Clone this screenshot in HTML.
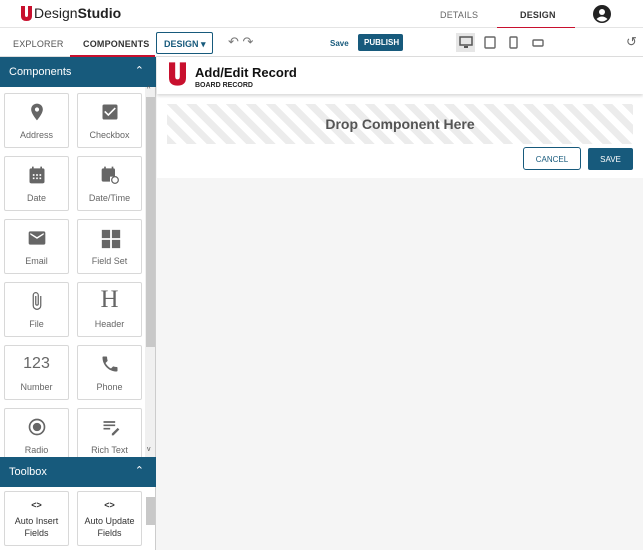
<!DOCTYPE html>
<html><head><style>
*{box-sizing:border-box;margin:0;padding:0}
body{width:643px;height:550px;overflow:hidden;font-family:"Liberation Sans",Arial,sans-serif;background:#f5f5f5;position:relative;color:#333}
.a{position:absolute}
.top{left:0;top:0;width:643px;height:28px;background:#fff;border-bottom:1px solid #e4e4e4}
.tb{left:0;top:28px;width:643px;height:29px;background:#fff;border-bottom:1px solid #ddd}
.tab{font-size:9px;font-weight:bold;color:#777;letter-spacing:.2px}
.side{left:0;top:57px;width:156px;height:493px;background:#fff;border-right:1px solid #ccc}
.hd{left:0;width:156px;height:30px;background:#175a7c;color:#fff;font-size:11px;padding:9px 0 0 9px}
.card{position:absolute;width:65px;height:55px;border:1px solid #d8d8d8;border-radius:2px;background:#fff;text-align:center;font-size:9px;color:#666}
.card .l{position:absolute;left:0;right:0;top:36px}
.card svg{position:absolute;left:22px;top:8px}
.sb{background:#c8c8c8}
</style></head><body>
<div class="a top"></div>
<svg class="a" style="left:21px;top:6px" width="11" height="15" viewBox="0 0 11 15"><path d="M0 0h4v9q0 2 1.5 2T7 9V0h4v10q0 5-5.5 5T0 10z" fill="#c8102e"/></svg>
<div class="a" style="left:34px;top:5px;font-size:14px;color:#222">Design<b>Studio</b></div>
<div class="a tab" style="left:440px;top:10px;font-weight:normal;color:#666">DETAILS</div>
<div class="a tab" style="left:520px;top:10px;color:#333">DESIGN</div>
<div class="a" style="left:497px;top:27px;width:78px;height:2px;background:#c8102e"></div>
<svg class="a" style="left:593px;top:5px" width="18" height="18" viewBox="0 0 18 18"><circle cx="9" cy="9" r="9" fill="#222"/><circle cx="9" cy="7" r="3" fill="#fff"/><path d="M3.5 14q5.5-5 11 0q-5.5 5-11 0z" fill="#fff"/></svg>
<div class="a tb"></div>
<div class="a tab" style="left:13px;top:39px;font-weight:normal;color:#555">EXPLORER</div>
<div class="a tab" style="left:83px;top:39px;color:#333">COMPONENTS</div>
<div class="a" style="left:70px;top:55px;width:85px;height:2px;background:#c8102e"></div>
<div class="a" style="left:156px;top:32px;width:57px;height:22px;border:1px solid #175a7c;border-radius:2px;font-size:9px;font-weight:bold;color:#175a7c;padding:6px 0 0 7px">DESIGN ▾</div>
<div class="a" style="left:228px;top:34px;font-size:13px;color:#777">↶ ↷</div>
<div class="a" style="left:330px;top:39px;font-size:8px;font-weight:bold;color:#175a7c">Save</div>
<div class="a" style="left:358px;top:34px;width:45px;height:17px;background:#175a7c;border-radius:2px;color:#fff;font-size:8px;font-weight:bold;padding:4px 0 0 6px">PUBLISH</div>
<div class="a" style="left:456px;top:33px;width:19px;height:19px;background:#e6e6e6"></div>
<svg class="a" style="left:459px;top:36px" width="14" height="13" viewBox="0 0 14 13"><rect x="1" y="1" width="12" height="8" fill="none" stroke="#555" stroke-width="1.5"/><path d="M5 10h4v2H5z" fill="#555"/></svg>
<svg class="a" style="left:484px;top:36px" width="12" height="13"><rect x="1" y="1" width="10" height="11" rx="1" fill="none" stroke="#666" stroke-width="1.4"/></svg>
<svg class="a" style="left:509px;top:36px" width="9" height="13"><rect x="1" y="1" width="7" height="11" rx="1" fill="none" stroke="#666" stroke-width="1.4"/></svg>
<svg class="a" style="left:532px;top:39px" width="12" height="8"><rect x="1" y="1" width="10" height="6" rx="1" fill="none" stroke="#666" stroke-width="1.4"/></svg>
<div class="a" style="left:626px;top:34px;font-size:13px;color:#666">↺</div>

<div class="a side"></div>
<div class="a hd" style="top:57px">Components<span style="position:absolute;right:12px;top:7px">⌃</span></div>
<div class="a sb" style="left:145px;top:87px;width:10px;height:370px;background:#f0f0f0"></div>
<div class="a sb" style="left:146px;top:97px;width:9px;height:250px"></div>
<div class="a" style="left:147px;top:86px;font-size:7px;color:#555">^</div>
<div class="a" style="left:147px;top:446px;font-size:7px;color:#555">v</div>

<div style="position:absolute;left:0;top:87px;width:145px;height:370px;overflow:hidden">
<div class="card" style="left:4px;top:6px"><svg width="20" height="20" viewBox="0 0 24 24"><path d="M12 2C8 2 5 5 5 9c0 5 7 13 7 13s7-8 7-13c0-4-3-7-7-7zm0 9.5a2.5 2.5 0 1 1 0-5 2.5 2.5 0 0 1 0 5z" fill="#666"/></svg><div class="l">Address</div></div>
<div class="card" style="left:77px;top:6px"><svg width="20" height="20" viewBox="0 0 24 24"><path d="M19 3H5a2 2 0 0 0-2 2v14a2 2 0 0 0 2 2h14a2 2 0 0 0 2-2V5a2 2 0 0 0-2-2zm-9 14l-5-5 1.4-1.4 3.6 3.6 7.6-7.6L19 8z" fill="#666"/></svg><div class="l">Checkbox</div></div>
<div class="card" style="left:4px;top:69px"><svg width="20" height="20" viewBox="0 0 24 24"><path d="M19 4h-1V2h-2v2H8V2H6v2H5a2 2 0 0 0-2 2v14a2 2 0 0 0 2 2h14a2 2 0 0 0 2-2V6a2 2 0 0 0-2-2zM7 11h2v2H7zm4 0h2v2h-2zm4 0h2v2h-2zM7 15h2v2H7zm4 0h2v2h-2zm4 0h2v2h-2z" fill="#666"/></svg><div class="l">Date</div></div>
<div class="card" style="left:77px;top:69px"><svg width="20" height="20" viewBox="0 0 24 24"><path d="M17 4h-1V2h-2v2H7V2H5v2H4a2 2 0 0 0-2 2v12a2 2 0 0 0 2 2h8v-6h6V6a2 2 0 0 0-1-2z" fill="#666"/><circle cx="18" cy="18" r="4" fill="none" stroke="#666" stroke-width="1.5"/></svg><div class="l">Date/Time</div></div>
<div class="card" style="left:4px;top:132px"><svg width="20" height="20" viewBox="0 0 24 24"><path d="M20 4H4a2 2 0 0 0-2 2v12a2 2 0 0 0 2 2h16a2 2 0 0 0 2-2V6a2 2 0 0 0-2-2zm0 4l-8 5-8-5V6l8 5 8-5z" fill="#666"/></svg><div class="l">Email</div></div>
<div class="card" style="left:77px;top:132px"><svg width="22" height="22" viewBox="0 0 24 24"><path d="M2 2h9v9H2zm11 0h9v9h-9zM2 13h9v9H2zm11 0h9v9h-9z" fill="#666"/></svg><div class="l">Field Set</div></div>
<div class="card" style="left:4px;top:195px"><svg width="20" height="20" viewBox="0 0 24 24"><path d="M16.5 6v11.5a4.5 4.5 0 0 1-9 0V5a3 3 0 0 1 6 0v10.5a1.5 1.5 0 0 1-3 0V6" fill="none" stroke="#666" stroke-width="1.5"/></svg><div class="l">File</div></div>
<div class="card" style="left:77px;top:195px"><div style="position:absolute;left:0;right:0;top:3px;font-family:'Liberation Serif',serif;font-size:25px;color:#666">H</div><div class="l">Header</div></div>
<div class="card" style="left:4px;top:258px"><div style="position:absolute;left:0;right:0;top:9px;font-size:16px;color:#666">123</div><div class="l">Number</div></div>
<div class="card" style="left:77px;top:258px"><svg width="20" height="20" viewBox="0 0 24 24"><path d="M6.6 10.8c1.4 2.8 3.8 5.1 6.6 6.6l2.2-2.2c.3-.3.7-.4 1-.2 1.1.4 2.3.6 3.6.6.6 0 1 .4 1 1V20c0 .6-.4 1-1 1C10.6 21 3 13.4 3 4c0-.6.4-1 1-1h3.5c.6 0 1 .4 1 1 0 1.3.2 2.5.6 3.6.1.3 0 .7-.2 1z" fill="#666"/></svg><div class="l">Phone</div></div>
<div class="card" style="left:4px;top:321px"><svg width="20" height="20" viewBox="0 0 24 24"><circle cx="12" cy="12" r="9" fill="none" stroke="#666" stroke-width="2"/><circle cx="12" cy="12" r="5" fill="#666"/></svg><div class="l">Radio</div></div>
<div class="card" style="left:77px;top:321px"><svg width="22" height="20" viewBox="0 0 24 24"><path d="M3 5h14v2H3zm0 4h14v2H3zm0 4h8v2H3zm10 7l7-7 2 2-7 7h-2z" fill="#666"/></svg><div class="l">Rich Text</div></div>
</div>

<div class="a hd" style="top:457px">Toolbox<span style="position:absolute;right:12px;top:7px">⌃</span></div>
<div class="a sb" style="left:146px;top:497px;width:9px;height:28px"></div>
<div class="card" style="left:4px;top:491px;color:#333"><div style="position:absolute;left:0;right:0;top:8px;font-weight:bold">&lt;&gt;</div><div style="position:absolute;left:0;right:0;top:23px;line-height:12px">Auto Insert<br>Fields</div></div>
<div class="card" style="left:77px;top:491px;color:#333"><div style="position:absolute;left:0;right:0;top:8px;font-weight:bold">&lt;&gt;</div><div style="position:absolute;left:0;right:0;top:23px;line-height:12px">Auto Update<br>Fields</div></div>

<div class="a" style="left:157px;top:57px;width:486px;height:121px;background:#fff"></div>
<div class="a" style="left:157px;top:57px;width:486px;height:37px;background:#fff;box-shadow:0 2px 3px rgba(0,0,0,.15)"></div>
<svg class="a" style="left:169px;top:61px" width="17" height="26" viewBox="0 0 11 15"><path d="M0 0h4v9q0 2 1.5 2T7 9V0h4v10q0 5-5.5 5T0 10z" fill="#c8102e"/></svg>
<div class="a" style="left:195px;top:65px;font-size:13px;font-weight:bold;color:#111">Add/Edit Record</div>
<div class="a" style="left:195px;top:82px;font-size:7px;font-weight:bold;color:#222">BOARD RECORD</div>
<div class="a" style="left:167px;top:104px;width:466px;height:40px;background:repeating-linear-gradient(45deg,#ececec 0 7px,#fff 7px 14px)"></div>
<div class="a" style="left:167px;top:116px;width:466px;text-align:center;font-size:14px;font-weight:bold;color:#555">Drop Component Here</div>
<div class="a" style="left:523px;top:147px;width:58px;height:23px;border:1px solid #175a7c;border-radius:3px;font-size:8px;color:#175a7c;text-align:center;padding-top:7px">CANCEL</div>
<div class="a" style="left:588px;top:148px;width:45px;height:22px;background:#175a7c;border-radius:2px;font-size:8px;color:#fff;text-align:center;padding-top:7px">SAVE</div>
</body></html>
